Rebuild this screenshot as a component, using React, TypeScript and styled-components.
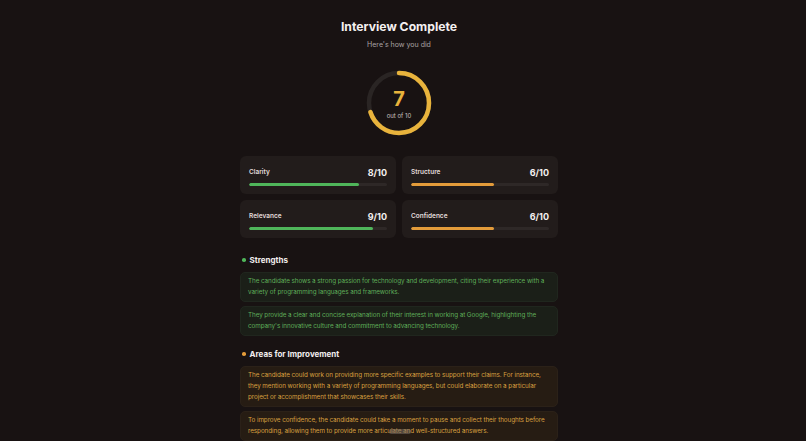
import styled, { createGlobalStyle } from "styled-components";

const GlobalStyle = createGlobalStyle`
  html, body {
    margin: 0;
    padding: 0;
    background: #181212;
    overflow: hidden;
  }
  body {
    font-family: Inter, "Noto Sans", sans-serif;
    color: #f2eeee;
  }
`;

type Metric = { label: string; score: number; tone: "good" | "mid" };

const metrics: Metric[] = [
  { label: "Clarity", score: 8, tone: "good" },
  { label: "Structure", score: 6, tone: "mid" },
  { label: "Relevance", score: 9, tone: "good" },
  { label: "Confidence", score: 6, tone: "mid" },
];

const strengths = [
  "The candidate shows a strong passion for technology and development, citing their experience with a variety of programming languages and frameworks.",
  "They provide a clear and concise explanation of their interest in working at Google, highlighting the company's innovative culture and commitment to advancing technology.",
];

const improvements = [
  "The candidate could work on providing more specific examples to support their claims. For instance, they mention working with a variety of programming languages, but could elaborate on a particular project or accomplishment that showcases their skills.",
  "To improve confidence, the candidate could take a moment to pause and collect their thoughts before responding, allowing them to provide more articulate and well-structured answers.",
];

const TONES = {
  good: { bar: "#4fb55a", text: "#5fae58", bg: "#1b1f18", border: "#20261e", dot: "#4fb55a" },
  mid: { bar: "#e39b3a", text: "#d9a040", bg: "#261c13", border: "#2b2118", dot: "#e39b3a" },
};

const ScoreRing = ({ score, max }: { score: number; max: number }) => {
  const r = 30;
  const c = 2 * Math.PI * r;
  const filled = (score / max) * c;
  return (
    <RingWrap>
      <svg width="68" height="68" viewBox="0 0 68 68">
        <circle cx="34" cy="34" r={r} fill="none" stroke="#2a2524" strokeWidth="4.5" />
        <circle
          cx="34"
          cy="34"
          r={r}
          fill="none"
          stroke="#e8b33c"
          strokeWidth="4.5"
          strokeLinecap="round"
          strokeDasharray={`${filled} ${c}`}
          transform="rotate(-90 34 34)"
        />
      </svg>
      <RingCenter>
        <BigScore>{score}</BigScore>
        <OutOf>out of {max}</OutOf>
      </RingCenter>
    </RingWrap>
  );
};

export default function App() {
  return (
    <Page>
      <GlobalStyle />
      <Column>
        <Title>Interview Complete</Title>
        <Subtitle>Here's how you did</Subtitle>
        <ScoreRing score={7} max={10} />
        <MetricGrid>
          {metrics.map((m) => (
            <MetricCard key={m.label}>
              <MetricHead>
                <MetricLabel>{m.label}</MetricLabel>
                <MetricScore>{m.score}/10</MetricScore>
              </MetricHead>
              <Track>
                <Fill $tone={m.tone} style={{ width: `${m.score * 10}%` }} />
              </Track>
            </MetricCard>
          ))}
        </MetricGrid>

        <Section>
          <SectionTitle $tone="good">Strengths</SectionTitle>
          {strengths.map((s, i) => (
            <Note key={i} $tone="good">
              {s}
            </Note>
          ))}
        </Section>

        <Section>
          <SectionTitle $tone="mid">Areas for Improvement</SectionTitle>
          {improvements.map((s, i) => (
            <Note key={i} $tone="mid">
              {s}
            </Note>
          ))}
        </Section>
      </Column>
      <ScrollHint />
    </Page>
  );
}

const Page = styled.div`
  position: relative;
  width: 806px;
  height: 441px;
  overflow: hidden;
  box-sizing: border-box;
  padding: 18px 8px 0 0;
`;

const Column = styled.div`
  width: 318px;
  margin: 0 auto;
  display: flex;
  flex-direction: column;
  align-items: center;
`;

const Title = styled.h1`
  margin: 0;
  font-size: 12.2px;
  line-height: 18px;
  font-weight: 700;
  color: #f4f0f0;
`;

const Subtitle = styled.p`
  margin: 4px 0 0;
  font-size: 7px;
  line-height: 10px;
  color: #aaa4a3;
`;

const RingWrap = styled.div`
  position: relative;
  width: 68px;
  height: 68px;
  margin-top: 19px;

  svg {
    display: block;
  }
`;

const RingCenter = styled.div`
  position: absolute;
  inset: 0;
  display: flex;
  flex-direction: column;
  align-items: center;
  justify-content: center;
  padding-top: 2px;
`;

const BigScore = styled.div`
  font-size: 20px;
  line-height: 22px;
  font-weight: 700;
  color: #e8b33c;
`;

const OutOf = styled.div`
  font-size: 6px;
  line-height: 8px;
  color: #c9c2c0;
  margin-top: 2px;
`;

const MetricGrid = styled.div`
  width: 100%;
  margin: 19px 0 4px;
  display: grid;
  grid-template-columns: 1fr 1fr;
  gap: 6px;
`;

const MetricCard = styled.div`
  background: #221c1b;
  border-radius: 6px;
  padding: 10px 9px 8px;
  display: flex;
  flex-direction: column;
  gap: 5px;
`;

const MetricHead = styled.div`
  display: flex;
  justify-content: space-between;
  align-items: center;
  height: 12px;
`;

const MetricLabel = styled.span`
  font-size: 6.5px;
  font-weight: 600;
  color: #e2dcdb;
`;

const MetricScore = styled.span`
  font-size: 9px;
  font-weight: 700;
  color: #f4f0f0;
`;

const Track = styled.div`
  height: 3px;
  border-radius: 2px;
  background: #2e2827;
  overflow: hidden;
`;

const Fill = styled.div<{ $tone: "good" | "mid" }>`
  height: 100%;
  border-radius: 2px;
  background: ${(p) => TONES[p.$tone].bar};
`;

const Section = styled.section`
  width: 100%;
  margin-top: 12px;
  display: flex;
  flex-direction: column;
  gap: 4px;
`;

const SectionTitle = styled.h2<{ $tone: "good" | "mid" }>`
  margin: 0 0 2px;
  display: flex;
  align-items: center;
  gap: 4px;
  padding-left: 2px;
  font-size: 8px;
  line-height: 12px;
  font-weight: 700;
  color: #f2eeee;

  &::before {
    content: "";
    width: 3.5px;
    height: 3.5px;
    border-radius: 50%;
    background: ${(p) => TONES[p.$tone].dot};
  }
`;

const Note = styled.div<{ $tone: "good" | "mid" }>`
  background: ${(p) => TONES[p.$tone].bg};
  border: 1px solid ${(p) => TONES[p.$tone].border};
  border-radius: 5px;
  padding: 3px 7px;
  font-size: 6.3px;
  letter-spacing: -0.06px;
  line-height: 11px;
  color: ${(p) => TONES[p.$tone].text};
`;

const ScrollHint = styled.div`
  position: absolute;
  left: 389px;
  top: 429px;
  width: 22px;
  height: 5px;
  border-radius: 3px;
  background: rgba(120, 110, 100, 0.55);
`;
